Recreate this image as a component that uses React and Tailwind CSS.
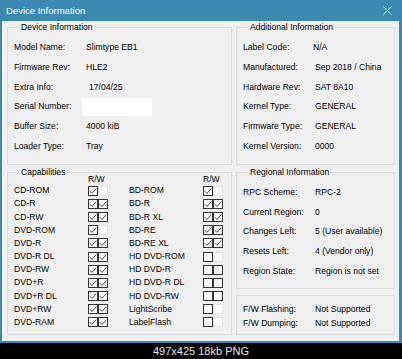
import React from "react";

function Group({ title, className = "", children }) {
  return (
    <fieldset className={`border border-[#dcdcdc] min-w-0 ${className}`}>
      {title && (
        <legend className="ml-[6px] px-[1px] leading-[12px] text-[8.6px] text-black">
          {title}
        </legend>
      )}
      {children}
    </fieldset>
  );
}

function Row({ label, value, className = "", valueClass = "" }) {
  return (
    <div className={`flex items-center h-[19.67px] ${className}`}>
      <span className="w-[72px] shrink-0">{label}</span>
      <span className={valueClass}>{value}</span>
    </div>
  );
}

function Box({ checked, disabled }) {
  return (
    <span
      className={`w-[10px] h-[10px] border bg-white flex items-center justify-center ${
        disabled ? "border-[#e2e2e2]" : "border-[#333333]"
      }`}
    >
      {checked && (
        <svg width="8" height="8" viewBox="0 0 8 8">
          <path d="M0.8 4.2 L3 6.4 L7.3 1.6" stroke="#333333" strokeWidth="0.9" fill="none" />
        </svg>
      )}
    </span>
  );
}

const caps1 = [
  ["CD-ROM", 1, 0, true],
  ["CD-R", 1, 1],
  ["CD-RW", 1, 1],
  ["DVD-ROM", 1, 0, true],
  ["DVD-R", 1, 1],
  ["DVD-R DL", 1, 1],
  ["DVD-RW", 1, 1],
  ["DVD+R", 1, 1],
  ["DVD+R DL", 1, 1],
  ["DVD+RW", 1, 1],
  ["DVD-RAM", 1, 1],
];
const caps2 = [
  ["BD-ROM", 1, 0, true],
  ["BD-R", 1, 1],
  ["BD-R XL", 1, 1],
  ["BD-RE", 1, 1],
  ["BD-RE XL", 1, 1],
  ["HD DVD-ROM", 0, 0, true],
  ["HD DVD-R", 0, 0],
  ["HD DVD-R DL", 0, 0],
  ["HD DVD-RW", 0, 0],
  ["LightScribe", 0, 0, true],
  ["LabelFlash", 0, 0, true],
];

function CapCell({ item }) {
  const [name, r, w, dis] = item;
  return (
    <div className="flex items-center h-[13.2px]">
      <span className="w-[74px] shrink-0">{name}</span>
      <Box checked={!!r} />
      <Box checked={!!w} disabled={!!dis} />
    </div>
  );
}

export default function App() {
  return (
    <div className="w-[402px] h-[359px] bg-black flex flex-col font-['Liberation_Sans',Arial,sans-serif] text-[8.6px] text-black">
      <div className="h-[343px] bg-[#3b89b0] pl-[2px] pr-[3px] pb-[2px] flex flex-col">
        <div className="h-[21px] flex items-center justify-between pl-[4px] pr-[7px] text-white">
          <span className="text-[9.5px] leading-[12px] pt-[1px]">Device Information</span>
          <svg width="9" height="9" viewBox="0 0 9 9">
            <path d="M0.5 0.5 L8.5 8.5 M8.5 0.5 L0.5 8.5" stroke="white" strokeWidth="1" />
          </svg>
        </div>
        <div className="flex-1 bg-[#f0f0f0] pl-[5px] pr-[4px] flex gap-[4px]">
          {/* left column */}
          <div className="w-[225px] flex flex-col gap-[1px]">
            <Group title="Device Information" className="h-[144px] pl-[6px] pt-[5px]">
              <Row label="Model Name:" value="Slimtype EB1" />
              <Row label="Firmware Rev:" value="HLE2" />
              <Row label="Extra Info:" value="17/04/25" valueClass="pl-[3px]" />
              <div className="flex items-center h-[19.67px]">
                <span className="w-[72px] shrink-0">Serial Number:</span>
                <span className="w-[70px] h-[18px] -ml-[4px] bg-white" />
              </div>
              <Row label="Buffer Size:" value="4000 kiB" />
              <Row label="Loader Type:" value="Tray" />
            </Group>
            <Group title="Capabilities" className="h-[169px] pl-[6px]">
              <div className="-mt-[4px] h-[10px] leading-[10px] flex">
                <span className="w-[115px] pl-[74px]">R/W</span>
                <span className="pl-[74px]">R/W</span>
              </div>
              <div className="grid grid-cols-[115px_1fr]">
                <div className="flex flex-col">
                  {caps1.map((c) => (
                    <CapCell key={c[0]} item={c} />
                  ))}
                </div>
                <div className="flex flex-col">
                  {caps2.map((c) => (
                    <CapCell key={c[0]} item={c} />
                  ))}
                </div>
              </div>
            </Group>
          </div>
          {/* right column */}
          <div className="w-[159px] flex flex-col">
            <Group title="Additional Information" className="h-[144px] pl-[6px] pt-[5px]">
              <Row label="Label Code:" value="N/A" valueClass="-ml-[2px]" />
              <Row label="Manufactured:" value="Sep 2018 / China" />
              <Row label="Hardware Rev:" value="SAT 8A10" />
              <Row label="Kernel Type:" value="GENERAL" />
              <Row label="Firmware Type:" value="GENERAL" />
              <Row label="Kernel Version:" value="0000" />
            </Group>
            <Group title="Regional Information" className="mt-[1px] h-[123px] pl-[6px] pt-[4.5px]">
              <Row label="RPC Scheme:" value="RPC-2" />
              <Row label="Current Region:" value="0" />
              <Row label="Changes Left:" value="5 (User available)" />
              <Row label="Resets Left:" value="4 (Vendor only)" />
              <Row label="Region State:" value="Region is not set" />
            </Group>
            <Group className="mt-[6px] h-[40px] pl-[6px] pt-[6px]">
              <div className="flex items-center h-[14px]">
                <span className="w-[72px] shrink-0">F/W Flashing:</span>
                <span>Not Supported</span>
              </div>
              <div className="flex items-center h-[14px]">
                <span className="w-[72px] shrink-0">F/W Dumping:</span>
                <span>Not Supported</span>
              </div>
            </Group>
          </div>
        </div>
      </div>
      <div className="flex-1 flex items-center justify-center text-[11px] leading-[16px] text-[#e6e6e6]">
        497x425 18kb PNG
      </div>
    </div>
  );
}
